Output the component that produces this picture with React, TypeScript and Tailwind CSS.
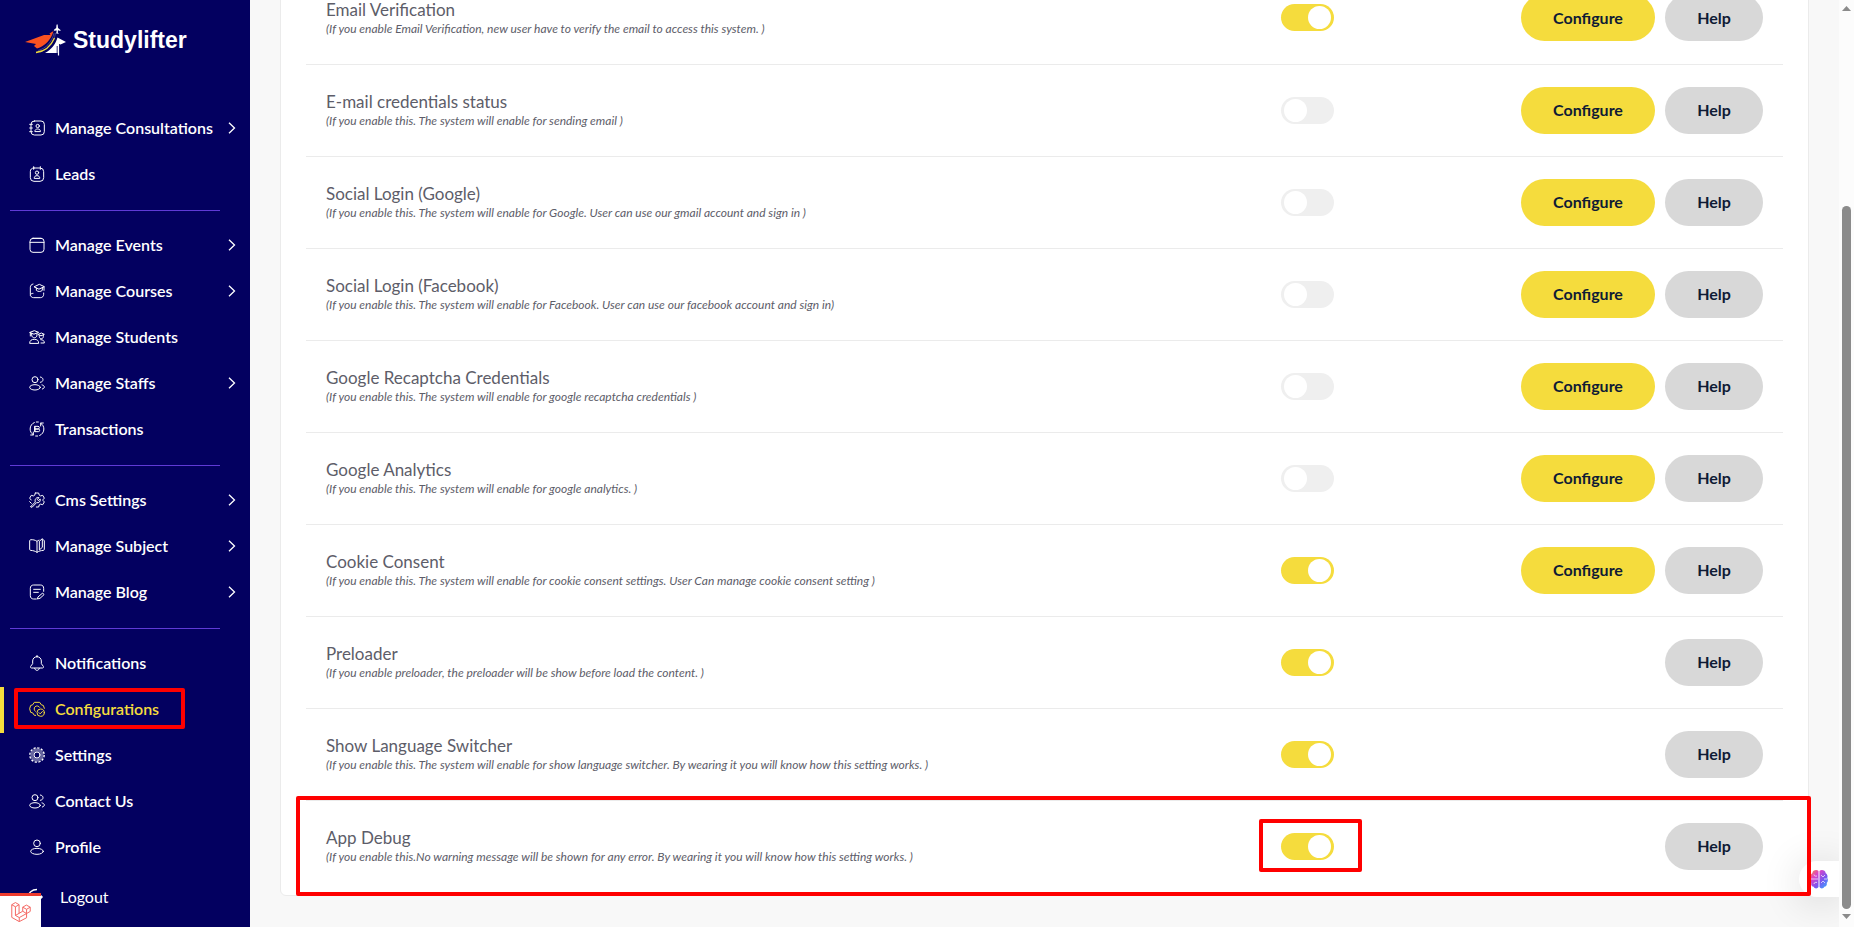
import { ReactNode, useState } from 'react';

type IconName =
  | 'contacts' | 'lead' | 'events' | 'courses' | 'students' | 'users' | 'transactions'
  | 'cms' | 'subject' | 'blog' | 'bell' | 'config' | 'settings' | 'profile';

const PATHS: Record<IconName, ReactNode> = {
  contacts: (
    <>
      <rect x="3" y="1.5" width="20" height="21" rx="5" />
      <path d="M1 6.5h4M1 12h4M1 17.5h4" />
      <circle cx="13" cy="9" r="2.5" />
      <path d="M8.8 16.8c0-2 1.700-3.300 4.200-3.300s4.200 1.300 4.200 3.300z" />
    </>
  ),
  lead: (
    <>
      <rect x="2" y="3" width="20" height="20" rx="5.500" />
      <path d="M7 1v4M17 1v4" />
      <circle cx="12" cy="10" r="2.500" />
      <path d="M7.800 18c0-2.200 1.700-3.500 4.200-3.500s4.200 1.300 4.200 3.500z" />
    </>
  ),
  events: (
    <>
      <rect x="1.500" y="2" width="21" height="21" rx="4.500" />
      <path d="M1.500 8h21M5.500 2h13" />
    </>
  ),
  courses: (
    <>
      <path d="M6 1.500C3.500 2 2 4 2 6.500V17c0 3 2 5 5 5h10c3 0 5-2 5-5v-2" />
      <path d="M2 18c.5-1.800 2-2.500 4-2.500" />
      <path d="M8 5.500 15.500 2 23 5.500 15.500 9zM11 7.500V11c2.500 2.300 6.500 2.300 9 0V7.500M22.500 6v5" />
    </>
  ),
  students: (
    <>
      <path d="M1.500 5 8 2.500 14.500 5 8 7.500zM4 6.500V9c0 5.500 8 5.500 8 0V6.500M2 5.500v5" />
      <path d="M1 21c0-4 3-5.500 7-5.500s6.500 1.500 6.500 5.500z" />
      <path d="m14 8 4.500-2L23 8l-4.500 2zM15.500 10v1.500c0 4 6 4 6 0V9M17.500 16c3.500 0 5.500 1.500 5.500 5h-5" />
    </>
  ),
  users: (
    <>
      <circle cx="9" cy="7" r="4.500" />
      <ellipse cx="9" cy="18.500" rx="8" ry="4" />
      <path d="M17 3c2.500.3 4 2 4 4s-1.500 3.800-4 4M19.500 14.800c2 .5 3.500 1.700 3.500 3.200s-1.200 2.500-3 3" />
    </>
  ),
  transactions: (
    <>
      <path d="M8 2.300C4.300 3.800 1.700 7.500 1.700 12c0 3.500 1.800 6.700 4.500 8.500M6.500 16.500v4.500H2.500" />
      <path d="M16 21.700c3.700-1.500 6.300-5.200 6.300-9.700 0-3.500-1.800-6.700-4.500-8.500M17.500 7.500V3h4M11 1.500h3M10 22.500h3" />
      <path d="M9 8h4.500a2 2 0 0 1 0 4H9zM9 12h5a2 2 0 0 1 0 4H9zM9 8v8" />
    </>
  ),
  cms: (
    <>
      <path d="M9.500 1.500h5l.9 3.300 2 1.100 3.200-.9 2.400 4.200-2.200 2.500v.8l2.200 2.400-2.400 4.200-3.200-.9-2 1.100-.9 3.200h-3.500M9.500 1.500l-.9 3.300-2 1.100L3.400 5 1 9.200 3.300 12" />
      <path d="m3 21.500 6.500-6.500c-1.500-4 1.500-7.500 5.500-6.500l-2.500 2.500 1.500 2 2.800-2.500c1 3.500-2 6.500-5.500 5.500L5 22.500c-1.500 1.200-3.300.3-2-1zM1 14.500 3.500 17" />
    </>
  ),
  subject: (
    <>
      <path d="M12 21.500V5C9.500 3 5.500 2.300 2.500 2.600 1.700 2.700 1 3.400 1 4.200V17c0 1 .6 1.500 1.500 1.600 3.500.2 6.800 1 9.500 2.900 2.700-1.900 6-2.700 9.500-2.900.9-.1 1.500-.6 1.500-1.600V4.200c0-.8-.5-1.200-1.500-1.400" />
      <path d="M12 5c1-.9 2-1.400 3-1.800M16 4.500 20 1v13l-4 3.500z" />
    </>
  ),
  blog: (
    <>
      <path d="M11 22.500H7c-3.200 0-5-1.800-5-5v-11c0-3.200 1.800-5 5-5h10c3.200 0 5 1.800 5 5V11" />
      <path d="M7 8h10M7 12.500h7M14 19l6.500-5.500 2 2.500-6 5.500-3.500.8z" />
    </>
  ),
  bell: (
    <>
      <path d="M12 2.500c-4 0-6.500 3-6.500 6.500v4L2.500 17c-.7 1.200-.2 2.500 1.200 2.500h16.600c1.400 0 1.900-1.300 1.200-2.500l-3-4V9c0-3.500-2.500-6.500-6.500-6.500zM12 .7v1.800" />
      <path d="M8.500 20c.5 2 1.800 3 3.500 3s3-1 3.500-3" />
    </>
  ),
  config: (
    <>
      <path d="M10 21.500H8L5.500 17.800 2.500 17l-1-3.500L1 11.500l1.500-4.800 3-1L8 2h8l2.500 3.700 3 1L23 11" />
      <path d="M9.500 15.500A4.500 4.500 0 1 1 16 9.500" />
      <circle cx="17.500" cy="17.500" r="5.500" />
      <path d="m15 17.500 1.800 1.800 3.200-3.500" />
    </>
  ),
  settings: (
    <>
      <circle cx="12" cy="12" r="7.500" strokeWidth="5" opacity=".4" />
      <circle cx="12" cy="12" r="10.800" strokeWidth="2" strokeDasharray="3.400 2.255" strokeLinecap="butt" />
      <circle cx="12" cy="12" r="4.500" strokeWidth="1.500" />
    </>
  ),
  profile: (
    <>
      <circle cx="12" cy="6.500" r="5" />
      <ellipse cx="12" cy="18.500" rx="9.500" ry="4.500" />
    </>
  ),
};

function Icon({ name }: { name: IconName }) {
  return (
    <svg viewBox="0 0 24 24" className="size-4 shrink-0" fill="none" stroke="currentColor" strokeWidth="1.5" strokeLinejoin="round" strokeLinecap="round" aria-hidden="true">
      {PATHS[name]}
    </svg>
  );
}

type Item = { label: string; icon: IconName; more?: boolean; active?: boolean };

const GROUPS: Item[][] = [
  [
    { label: 'Manage Consultations', icon: 'contacts', more: true },
    { label: 'Leads', icon: 'lead' },
  ],
  [
    { label: 'Manage Events', icon: 'events', more: true },
    { label: 'Manage Courses', icon: 'courses', more: true },
    { label: 'Manage Students', icon: 'students' },
    { label: 'Manage Staffs', icon: 'users', more: true },
    { label: 'Transactions', icon: 'transactions' },
  ],
  [
    { label: 'Cms Settings', icon: 'cms', more: true },
    { label: 'Manage Subject', icon: 'subject', more: true },
    { label: 'Manage Blog', icon: 'blog', more: true },
  ],
  [
    { label: 'Notifications', icon: 'bell' },
    { label: 'Configurations', icon: 'config', active: true },
    { label: 'Settings', icon: 'settings' },
    { label: 'Contact Us', icon: 'users' },
    { label: 'Profile', icon: 'profile' },
  ],
];

type Setting = { title: string; note: string; on: boolean; configurable?: boolean; marked?: boolean };

const SETTINGS: Setting[] = [
  { title: 'Email Verification', note: '(If you enable Email Verification, new user have to verify the email to access this system. )', on: true, configurable: true },
  { title: 'E-mail credentials status', note: '(If you enable this. The system will enable for sending email )', on: false, configurable: true },
  { title: 'Social Login (Google)', note: '(If you enable this. The system will enable for Google. User can use our gmail account and sign in )', on: false, configurable: true },
  { title: 'Social Login (Facebook)', note: '(If you enable this. The system will enable for Facebook. User can use our facebook account and sign in)', on: false, configurable: true },
  { title: 'Google Recaptcha Credentials', note: '(If you enable this. The system will enable for google recaptcha credentials )', on: false, configurable: true },
  { title: 'Google Analytics', note: '(If you enable this. The system will enable for google analytics. )', on: false, configurable: true },
  { title: 'Cookie Consent', note: '(If you enable this. The system will enable for cookie consent settings. User Can manage cookie consent setting )', on: true, configurable: true },
  { title: 'Preloader', note: '(If you enable preloader, the preloader will be show before load the content. )', on: true },
  { title: 'Show Language Switcher', note: '(If you enable this. The system will enable for show language switcher. By wearing it you will know how this setting works. )', on: true },
  { title: 'App Debug', note: '(If you enable this.No warning message will be shown for any error. By wearing it you will know how this setting works. )', on: true, marked: true },
];

function Logo() {
  return (
    <a href="#home" className="flex items-center gap-1.5 pt-[22px] pb-12 pl-[25px]">
      <svg viewBox="0 0 42 36" className="h-9 w-[42px]" aria-hidden="true">
        <path d="M0 20 19 13h6.500l-1-1.500 4-2.500C26 18 20 24 12 26.500L9 24l2-2z" fill="#fb5221" />
        <path d="M29 11C27 20 21 26.500 13 28.500M30.500 11C29 21 23 27.500 15 30" fill="none" stroke="#5b5a9c" strokeWidth=".7" />
        <path d="M29.500 16C26 24 20 29.500 11 30.500" fill="none" stroke="#f3dc3d" strokeWidth="1.300" />
        <path d="M32.500 15.500 41 20l-5.500 2.500L34 22v9H20c6-3 10.500-8.500 12.500-15.500z" fill="#fff" />
        <path d="M32.200 24v10" stroke="#030060" strokeWidth=".9" />
        <path d="M33.500 23v10.500" stroke="#fff" strokeWidth="1.200" />
        <path d="M31.500 3c.4-1 1-1 1.200 0l.3 3 2.500 2-.1 1-2.400-.7-.2 2.200 1.100 1.200-2.700-.2.500-3-2.900.3.200-1 2.200-1.900z" fill="#fff" />
      </svg>
      <span className="text-[23px] leading-9 font-bold text-white [font-family:'Liberation_Sans',sans-serif]">Studylifter</span>
    </a>
  );
}

function NavItem({ item }: { item: Item }) {
  return (
    <li className="relative">
      <a
        href="#menu"
        aria-current={item.active ? 'page' : undefined}
        className={`flex h-[46px] items-center gap-[10px] border-l-4 pr-3.5 pb-0.5 pl-[25px] text-base font-semibold ${item.active ? 'border-[#f5dc3d] text-[#f5dc3d]' : 'border-transparent text-white'}`}
      >
        <Icon name={item.icon} />
        <span className="flex-1 whitespace-nowrap">{item.label}</span>
        {item.more && (
          <svg viewBox="0 0 8 12" className="h-3 w-2" fill="none" stroke="currentColor" strokeWidth="1.300" aria-hidden="true">
            <path d="m1 .7 5.500 5.300L1 11.300" />
          </svg>
        )}
      </a>
      {item.active && <span className="pointer-events-none absolute top-px bottom-1 left-3.5 w-[171px] rounded-xs border-4 border-[#ff0000]" />}
    </li>
  );
}

function Sidebar() {
  return (
    <aside className="w-[250px] shrink-0 overflow-hidden bg-[#030060]">
      <Logo />
      <nav>
        {GROUPS.map((group, i) => (
          <ul key={i}>
            {i > 0 && <li role="separator" className="my-3 mr-[30px] ml-2.5 h-px bg-[#5f3ad6]" />}
            {group.map((item) => (
              <NavItem key={item.label} item={item} />
            ))}
          </ul>
        ))}
      </nav>
      <button type="button" className="mt-1 flex h-11 items-center gap-[17px] pl-[27px] text-base text-white">
        <svg viewBox="0 0 16 16" className="size-4 overflow-visible" fill="none" stroke="currentColor" strokeWidth="1.500" aria-hidden="true">
          <path d="M10 .5C5 .5 1 4 1 8s4 7 9 7M6 8h9M12.500 5.500 15 8l-2.500 2.500" />
        </svg>
        Logout
      </button>
    </aside>
  );
}

function SettingRow({ setting }: { setting: Setting }) {
  const [on, setOn] = useState(setting.on);
  return (
    <tr className="h-[92px] border-b border-[#ebebeb] last:border-b-0">
      <td className="w-[64.66%] pb-0.5 pl-5 text-[#5d5d69]">
        <div className="text-[17px] leading-6">{setting.title}</div>
        <div className="text-xs leading-3.5 italic">{setting.note}</div>
      </td>
      <td className="pl-5">
        <label className="relative inline-flex align-middle">
          <input
            type="checkbox"
            role="switch"
            aria-label={setting.title}
            checked={on}
            onChange={(e) => setOn(e.target.checked)}
            className="flex h-[27px] w-[53px] appearance-none items-center rounded-full bg-[#efefef] px-[3px] before:size-[23px] before:rounded-full before:bg-white checked:justify-end checked:bg-[#f5dc3d]"
          />
          {setting.marked && <span className="pointer-events-none absolute -top-3.5 -right-7 -bottom-3 -left-[22px] rounded-xs border-4 border-[#ff0000]" />}
        </label>
      </td>
      <td className="pr-5">
        <div className="flex justify-end gap-2.5 text-base font-bold text-[#0f1b35]">
          {setting.configurable && (
            <button type="button" className="h-[47px] w-[134px] rounded-full bg-[#f5dc3d]">Configure</button>
          )}
          <button type="button" className="h-[47px] w-[98px] rounded-full bg-[#d8d8d8]">Help</button>
        </div>
      </td>
    </tr>
  );
}

function Assistant() {
  return (
    <button type="button" aria-label="Assistant" className="absolute right-0 bottom-[30px] flex h-9 w-10 items-center rounded-l-full bg-white pl-[11px] shadow-[0_4px_40px_rgba(0,0,0,0.16)]">
      <svg viewBox="0 0 18 20" className="h-5 w-[18px]" aria-hidden="true">
        <defs>
          <linearGradient id="brain" x1="0" y1="0" x2="1" y2="1">
            <stop offset="0" stopColor="#ff8a3c" />
            <stop offset=".3" stopColor="#d944c8" />
            <stop offset=".62" stopColor="#7a55f0" />
            <stop offset="1" stopColor="#35b4ff" />
          </linearGradient>
        </defs>
        <path fill="url(#brain)" d="M8.500 2v16c-1 2-4 1.800-4.800-.2C1.500 17.500.8 15.500 1.300 14-.2 12.500-.2 10.500.8 9c-.8-2 0-4 1.500-4.800C2.500 1 7 .2 8.500 2zM9.500 2c1.500-1.800 6-1 6.200 2.200C17.200 5 18 7 17.200 9c1 1.500 1 3.500-.5 5 .5 1.500-.2 3.500-2.400 3.800-.8 2-3.800 2.200-4.800.2z" />
        <path d="M1 10h7M4 5.500c0 1.500 1.500 2 3 1.500M4 15c0-1.500 1.500-2 3-1.500M11 6l2 2 2-2M11 14l2-2 2 2M14 10h3" fill="none" stroke="#fff" strokeWidth=".9" opacity=".75" />
      </svg>
    </button>
  );
}

function ScrollTrack() {
  return (
    <div className="flex w-[15px] shrink-0 flex-col items-center bg-[#fcfcfc] pt-1.5 pb-2" aria-hidden="true">
      <svg viewBox="0 0 9 5" className="h-[5px] w-[9px]"><path d="M4.500 0 9 5H0z" fill="#8b8b8b" /></svg>
      <div className="mt-[195px] mb-[5px] w-[9px] flex-1 rounded-full bg-[#8b8b8b]" />
      <svg viewBox="0 0 9 5" className="h-[5px] w-[9px]"><path d="M4.500 5 9 0H0z" fill="#8b8b8b" /></svg>
    </div>
  );
}

export default function App() {
  return (
    <div className="relative flex h-screen overflow-hidden bg-[#f8f8f8] font-[Lato,sans-serif]">
      <Sidebar />
      <main className="relative flex min-w-0 flex-1 flex-col justify-end overflow-hidden px-[30px] pb-[31px]">
        <section className="rounded-md border border-[#ebebeb] bg-white px-[25px] pb-[3px]">
          <table className="w-full border-collapse">
            <tbody>
              {SETTINGS.map((s) => (
                <SettingRow key={s.title} setting={s} />
              ))}
            </tbody>
          </table>
        </section>
        <Assistant />
        <span className="pointer-events-none absolute right-7 bottom-[31px] left-[46px] h-[100px] rounded-xs border-4 border-[#ff0000]" />
      </main>
      <ScrollTrack />
      <a href="#debugbar" aria-label="Laravel debug bar" className="absolute bottom-0 left-0 flex h-[34px] w-[41px] items-center justify-center border-t-[3px] border-[#ee3b2d] bg-white">
        <svg viewBox="0 0 50 52" className="size-5" fill="none" stroke="#f4645f" strokeWidth="2.500" strokeLinejoin="round" aria-hidden="true">
          <path d="M1 7 10.500 1.500 20 7v22.500l9.500-5.500V13.500l9.500-5.500 10 5.500v11l-9.500 5.500v11L20.500 51 1 40zM1 7l9.500 5.500L20 7M10.500 12.500v22.500l10 5.500 19-10.500-10-6M20 29.500 10.500 35M20.500 40.500V51M29.500 13.500l10 5.500 9.500-5.500M39.500 19v11" />
        </svg>
      </a>
    </div>
  );
}
